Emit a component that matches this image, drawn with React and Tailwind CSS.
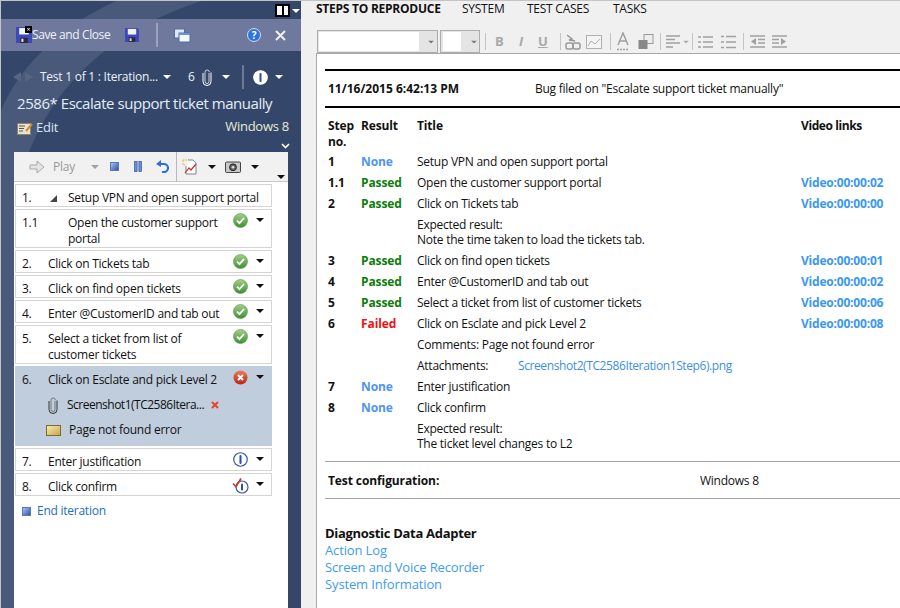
import React from "react";

const font = { fontFamily: '"Open Sans", "Noto Sans", sans-serif', letterSpacing: "-0.25px" };

const Caret = ({ color = "#111", className = "" }) => (
  <svg width="8" height="4" viewBox="0 0 8 4" className={`shrink-0 ${className}`}>
    <path d="M0 0h8L4 4z" fill={color} />
  </svg>
);

const Floppy = ({ size = 15 }) => (
  <svg width={size} height={size} viewBox="0 0 15 15">
    <path d="M0 0h13l2 2v13H0z" fill="#3f48b8" />
    <rect x="3" y="1" width="9" height="6" fill="#f2f4fb" />
    <rect x="4" y="10" width="7" height="5" fill="#2a2a44" />
    <rect x="5" y="11" width="2" height="3" fill="#ddd" />
  </svg>
);

const Clip = ({ stroke = "#fff", back = "#555" }) => (
  <svg width="10" height="17" viewBox="0 0 10 17" className="shrink-0">
    <path
      d="M7 4v8.5a2 2 0 0 1-4 0V3.2a2.2 2.2 0 0 1 4.4 0"
      fill="none"
      stroke={back}
      strokeWidth="1"
    />
    <path d="M1 4v8.5a4 4 0 0 0 8 0V3.5" fill="none" stroke={stroke} strokeWidth="1" />
  </svg>
);

const StopSquare = ({ size = 9 }) => (
  <span
    className="block bg-gradient-to-br from-[#a9c3ee] to-[#2f55a8] border border-[#5a78b8]"
    style={{ width: size, height: size }}
  />
);

const Pass = () => (
  <svg width="15" height="15" viewBox="0 0 15 15">
    <defs>
      <linearGradient id="gp" x1="0" y1="0" x2="0" y2="1">
        <stop offset="0" stopColor="#a4d08c" />
        <stop offset="1" stopColor="#3d8f2e" />
      </linearGradient>
    </defs>
    <circle cx="7.5" cy="7.5" r="7" fill="url(#gp)" stroke="#55904a" strokeWidth="0.6" />
    <path d="M4 7.6l2.5 2.6L11 5" fill="none" stroke="#fff" strokeWidth="1.8" />
  </svg>
);

const Fail = () => (
  <svg width="15" height="15" viewBox="0 0 15 15">
    <defs>
      <linearGradient id="gf" x1="0" y1="0" x2="0" y2="1">
        <stop offset="0" stopColor="#ee7a5c" />
        <stop offset="1" stopColor="#bb2410" />
      </linearGradient>
    </defs>
    <circle cx="7.5" cy="7.5" r="7" fill="url(#gf)" />
    <path d="M5 5l5 5M10 5l-5 5" stroke="#fff" strokeWidth="2" />
  </svg>
);

const Info = ({ size = 16, fill = "#fff", ring = "#3a5da5", bar = "#2f4f96", width = 1.3 }) => (
  <svg width={size} height={size} viewBox="0 0 16 16">
    <circle cx="8" cy="8" r="7.2" fill={fill} stroke={ring} strokeWidth={width} />
    <rect x="6.9" y="3.2" width="2.2" height="9.6" rx="1" fill={bar} />
  </svg>
);

const InfoChecked = () => (
  <svg width="17" height="17" viewBox="0 0 17 17">
    <circle cx="10" cy="10" r="6" fill="#fff" stroke="#3a5da5" strokeWidth="1.2" />
    <rect x="9" y="6.5" width="2" height="7" rx="1" fill="#2f4f96" />
    <path d="M1 6.5l3 3.2L9 1.5" fill="none" stroke="#cf3a2a" strokeWidth="1.7" />
  </svg>
);

const StepRow = ({ no, text, icon, wrap, h = "h-[23px]", children, active, caret = true, indent }) => (
  <div
    className={`${h} w-[257px] ml-px border flex items-start shrink-0 ${
      active ? "bg-[#bfcddc] border-[#bfcddc]" : "bg-white border-[#d4d4d4]"
    }`}
  >
    <div className="w-[32px] pl-[6px] pt-[4px] shrink-0">{no}</div>
    <div className="flex-1 min-w-0">
      <div className={`pt-[5px] leading-[16px] ${indent ? "pl-[20px]" : ""} ${wrap || ""}`}>{text}</div>
      {children}
    </div>
    <div className="w-[18px] pt-[3px] flex justify-center shrink-0">{icon}</div>
    <div className="w-[22px] pt-[8px] pl-[7px] shrink-0">{caret && <Caret className="block" />}</div>
  </div>
);

const StepsToolbar = () => (
  <div className="h-[30px] bg-[#f1f1f1] border-b border-[#c8c8c8] flex items-center relative">
    <svg width="16" height="14" viewBox="0 0 16 14" className="ml-[15px]">
      <path d="M1 5h7V1l7 6-7 6V9H1z" fill="#e5e5e5" stroke="#a8a8a8" />
    </svg>
    <span className="ml-[8px] text-[#9a9a9a]">Play</span>
    <Caret color="#a0a0a0" className="ml-[16px]" />
    <span className="ml-[11px]"><StopSquare /></span>
    <svg width="8" height="11" viewBox="0 0 8 11" className="ml-[15px]">
      <rect x="0.5" y="0.5" width="2.6" height="10" fill="#6f8fd0" stroke="#2f55a8" strokeWidth="0.7" />
      <rect x="4.9" y="0.5" width="2.6" height="10" fill="#6f8fd0" stroke="#2f55a8" strokeWidth="0.7" />
    </svg>
    <svg width="13" height="13" viewBox="0 0 13 13" className="ml-[14px]">
      <path d="M3 4h5a3.5 3.5 0 0 1 0 8H6" fill="none" stroke="#2f6fd0" strokeWidth="2.2" />
      <path d="M5 0v7L0 4z" fill="#2f6fd0" />
    </svg>
    <span className="ml-[7px] w-px h-[30px] bg-[#b8b8b8]" />
    <svg width="16" height="16" viewBox="0 0 16 16" className="ml-[5px]">
      <rect x="1" y="1" width="6" height="5" fill="none" stroke="#e0b820" strokeDasharray="1.5 1" />
      <path d="M6 1h5l3 3v11H4V7" fill="#fff" stroke="#667" strokeWidth="0.8" />
      <path d="M3 14l4-5 2 2 5-6" fill="none" stroke="#c8302a" strokeWidth="1.2" />
    </svg>
    <Caret className="ml-[10px]" />
    <svg width="16" height="13" viewBox="0 0 16 13" className="ml-[9px]">
      <rect x="0.5" y="2" width="15" height="10.5" rx="1" fill="#c8c8c8" stroke="#444" />
      <circle cx="8" cy="7.3" r="3.4" fill="#666" stroke="#222" />
      <circle cx="8" cy="7.3" r="1.3" fill="#ddd" />
    </svg>
    <Caret className="ml-[10px]" />
    <Caret className="absolute right-[3px] bottom-[2px]" />
  </div>
);

const LeftPanel = () => (
  <div className="w-[301px] h-[608px] shrink-0 relative overflow-hidden bg-[#34476a] border-l border-t border-[#c4c4c4] text-[12px]">
    <svg className="absolute left-0 top-0" width="301" height="608" viewBox="0 0 301 608">
      <path d="M200 0C110 30 35 90 14 200V608H0V110C20 60 70 20 115 0z" fill="#fff" opacity="0.1" />
    </svg>
    <div className="relative flex flex-col h-full">
      <div className="h-[18px] flex items-center justify-end pt-[1px]">
        <span className="w-[15px] h-[13px] border-2 border-black bg-white flex justify-center">
          <span className="w-[2px] bg-black" />
        </span>
        <Caret color="#fff" className="ml-[2px] mr-[1px]" />
      </div>
      <div className="h-[32px] bg-[#6f789d] flex items-center text-[#f0f2f8] whitespace-nowrap">
        <span className="ml-[15px] relative">
          <Floppy size={16} />
          <span className="absolute -top-[1px] left-[9px] w-[7px] h-[7px] bg-black text-white text-[7px] leading-[7px] text-center">×</span>
        </span>
        <span className="ml-[0px] tracking-[-0.4px] w-[79px] shrink-0">Save and Close</span>
        <span className="ml-[14px]"><Floppy size={14} /></span>
        <span className="ml-[17px] w-[2px] h-[24px] bg-[#9aa2bd]" />
        <svg width="17" height="15" viewBox="0 0 17 15" className="ml-[16px]">
          <rect x="0.5" y="1" width="10" height="9" fill="#dfe9f5" stroke="#4a6fa8" />
          <rect x="5" y="5" width="11" height="9" fill="#f4f7fb" stroke="#4a6fa8" />
          <rect x="5" y="5" width="11" height="2" fill="#6c93c8" />
        </svg>
        <span className="ml-[56px] w-[14px] h-[14px] rounded-full bg-[#2f73d8] border border-[#cfe0f8] text-white text-[10px] font-bold leading-[12px] text-center">?</span>
        <svg width="11" height="11" viewBox="0 0 11 11" className="ml-[14px]">
          <path d="M1 1l9 9M10 1l-9 9" stroke="#f0f0f0" strokeWidth="2" />
        </svg>
      </div>
      <div className="h-[26px] flex items-center text-[#eef2f8] whitespace-nowrap mt-[13px]">
        <svg width="20" height="10" viewBox="0 0 20 10" className="ml-[12px]">
          <path d="M8 0v10L0 5zM12 0v10l8-5z" fill="#58657f" />
        </svg>
        <span className="ml-[7px] w-[116px] shrink-0">Test 1 of 1 : Iteration...</span>
        <Caret color="#fff" className="ml-[7px]" />
        <span className="ml-[17px]">6</span>
        <span className="ml-[7px]"><Clip back="#cfd6e2" /></span>
        <Caret color="#fff" className="ml-[10px]" />
        <span className="ml-[12px] w-[2px] h-[24px] bg-[#6d7a94]" />
        <span className="ml-[9px]">
          <Info size={15} fill="#fff" ring="#fff" bar="#2f4f96" />
        </span>
        <Caret color="#fff" className="ml-[7px]" />
      </div>
      <div className="pl-[16px] text-[15px] leading-[22px] tracking-[-0.45px] text-[#e4edf7] whitespace-nowrap mt-[2px]">
        2586* Escalate support ticket manually
      </div>
      <div className="h-[22px] flex items-center text-[#dce6f4] text-[13px] mt-[3px] whitespace-nowrap">
        <svg width="16" height="13" viewBox="0 0 16 13" className="ml-[16px]">
          <rect x="0.5" y="1.5" width="13" height="11" fill="#e8e2cf" stroke="#8a8470" />
          <path d="M2 4h6M2 6.5h5M2 9h4" stroke="#555" />
          <path d="M9 9l6-7" stroke="#d88a20" strokeWidth="2" />
        </svg>
        <span className="ml-[3px]">Edit</span>
        <span className="ml-auto mr-[12px] text-[#e6ecd2] -mt-[3px]">Windows 8</span>
      </div>
      <div className="h-[7px] flex justify-end pr-[11px] mt-[4px]">
        <svg width="9" height="6" viewBox="0 0 9 6">
          <path d="M1 1l3.5 3.5L8 1" fill="none" stroke="#fff" strokeWidth="1.6" />
        </svg>
      </div>
      <div className="mt-[2px] ml-[13px] w-[274px] flex-1 bg-white text-[#111]">
        <StepsToolbar />
        <div className="flex flex-col gap-[2px] pt-[2px]">
          <StepRow
            no="1."
            caret={false}
            text={
              <span className="flex items-center">
                <svg width="7" height="7" viewBox="0 0 7 7" className="ml-[2px] shrink-0">
                  <path d="M7 0v7H0z" fill="#444" />
                </svg>
                <span className="ml-[11px] whitespace-nowrap">Setup VPN and open support portal</span>
              </span>
            }
          />
          <StepRow no="1.1" h="h-[39px]" indent text={<>Open the customer support<br />portal</>} icon={<Pass />} />
          <StepRow no="2." text="Click on Tickets tab" icon={<Pass />} />
          <StepRow no="3." text="Click on find open tickets" icon={<Pass />} />
          <StepRow no="4." text="Enter @CustomerID and tab out" icon={<Pass />} />
          <StepRow no="5." h="h-[39px]" text={<>Select a ticket from list of<br />customer tickets</>} icon={<Pass />} />
          <StepRow no="6." h="h-[80px]" active text="Click on Esclate and pick Level 2" icon={<Fail />}>
            <div className="flex items-center mt-[9px] h-[16px]">
              <Clip stroke="#333" back="#777" />
              <span className="ml-[9px] whitespace-nowrap tracking-[-0.5px]">Screenshot1(TC2586Itera...</span>
              <svg width="8" height="8" viewBox="0 0 8 8" className="ml-[7px] shrink-0">
                <path d="M1 1l6 6M7 1l-6 6" stroke="#e8452f" strokeWidth="2" />
              </svg>
            </div>
            <div className="flex items-center mt-[9px] h-[16px] -ml-[2px]">
              <span className="w-[15px] h-[11px] bg-gradient-to-br from-[#f7eaa8] to-[#c8a84c] border border-[#7d6a30]" />
              <span className="ml-[8px]">Page not found error</span>
            </div>
          </StepRow>
          <StepRow no="7." text="Enter justification" icon={<Info size={15} />} />
          <StepRow no="8." text="Click confirm" icon={<InfoChecked />} />
        </div>
        <div className="flex items-center ml-[8px] mt-[6px] text-[#1c6dc8]">
          <StopSquare />
          <span className="ml-[6px]">End iteration</span>
        </div>
      </div>
    </div>
  </div>
);

const Sep = ({ ml }) => <span className={`${ml} w-px h-[17px] bg-[#c4c4c4] shrink-0`} />;

const EditorToolbar = () => (
  <div className="h-[36px] bg-[#f0f0f0] flex items-center pt-[13px] pl-[13px] text-[#a8a8a8]">
    <div className="w-[121px] h-[23px] border border-[#adadad] bg-[#e4e4e4] flex items-center shrink-0">
      <span className="w-[100px] h-[19px] ml-px bg-white" />
      <Caret color="#777" className="ml-[8px] scale-75" />
    </div>
    <div className="w-[40px] h-[23px] border border-[#adadad] bg-[#e4e4e4] flex items-center ml-[2px] shrink-0">
      <span className="w-[18px] h-[19px] ml-[2px] bg-white" />
      <Caret color="#777" className="ml-[9px] scale-75" />
    </div>
    <Sep ml="ml-[5px]" />
    <span className="ml-[9px] font-bold text-[13px] w-[14px]">B</span>
    <span className="ml-[10px] font-bold italic text-[13px] w-[10px]">I</span>
    <span className="ml-[9px] font-bold underline text-[13px] w-[13px]">U</span>
    <Sep ml="ml-[9px]" />
    <svg width="16" height="16" viewBox="0 0 16 16" className="ml-[4px]">
      <path d="M2 1l5 4-3 1 6 1" fill="none" stroke="#999" strokeWidth="1.5" />
      <rect x="1" y="9" width="7" height="6" rx="2" fill="none" stroke="#999" strokeWidth="1.5" />
      <rect x="8" y="9" width="7" height="6" rx="2" fill="none" stroke="#999" strokeWidth="1.5" />
    </svg>
    <svg width="16" height="14" viewBox="0 0 16 14" className="ml-[5px]">
      <rect x="0.5" y="0.5" width="15" height="13" fill="#f4f4f4" stroke="#b0b0b0" />
      <path d="M2 11l3-5 4 3 5-5" fill="none" stroke="#b0b0b0" />
    </svg>
    <Sep ml="ml-[8px]" />
    <svg width="14" height="19" viewBox="0 0 14 19" className="ml-[5px]">
      <path d="M2 13L7 1l5 12M4 9h6" fill="none" stroke="#a0a0a0" strokeWidth="1.5" />
      <path d="M1 17.5h12" stroke="#a0a0a0" strokeDasharray="2 1" strokeWidth="1.5" />
    </svg>
    <svg width="16" height="16" viewBox="0 0 16 16" className="ml-[8px]">
      <rect x="6" y="0.5" width="9" height="9" fill="#eee" stroke="#999" />
      <rect x="0.5" y="6" width="9" height="9" fill="#888" />
    </svg>
    <Sep ml="ml-[6px]" />
    <svg width="14" height="13" viewBox="0 0 14 13" className="ml-[5px]">
      <path d="M0 1h14M0 4.5h9M0 8h14M0 12h7" stroke="#a0a0a0" strokeWidth="1.5" />
    </svg>
    <Caret color="#aaa" className="ml-[2px] scale-75" />
    <Sep ml="ml-[2px]" />
    <svg width="15" height="14" viewBox="0 0 15 14" className="ml-[5px]">
      <path d="M0 2h3M5 2h10M0 7h3M5 7h10M0 12h3M5 12h10" stroke="#a0a0a0" strokeWidth="1.5" />
    </svg>
    <svg width="15" height="16" viewBox="0 0 15 16" className="ml-[8px]">
      <path d="M0 2.5h3M5 2.5h10M0 8h3M5 8h10M0 13.5h3M5 13.5h10" stroke="#a0a0a0" strokeWidth="1.3" />
    </svg>
    <Sep ml="ml-[7px]" />
    <svg width="15" height="13" viewBox="0 0 15 13" className="ml-[6px]">
      <path d="M0 1h15M8 4.5h7M8 8h7M0 12h15" stroke="#a0a0a0" strokeWidth="1.3" />
      <path d="M6 3L1 6.5 6 10z" fill="#a0a0a0" />
    </svg>
    <svg width="15" height="13" viewBox="0 0 15 13" className="ml-[7px]">
      <path d="M0 1h15M0 4.5h7M0 8h7M0 12h15" stroke="#a0a0a0" strokeWidth="1.3" />
      <path d="M9 3l5 3.5L9 10z" fill="#a0a0a0" />
    </svg>
  </div>
);

const Cols = ({ step, result, resultClass = "", title, video, h = "h-[21px]" }) => (
  <div className={`${h} flex items-start leading-[15px]`}>
    <span className="w-[36px] pl-[3px] font-bold shrink-0 tracking-[-0.1px]">{step}</span>
    <span className={`w-[56px] shrink-0 font-bold tracking-[-0.1px] ${resultClass}`}>{result}</span>
    <span className="w-[384px] shrink-0 whitespace-nowrap">{title}</span>
    {video && <span className="font-bold tracking-[-0.2px] text-[#3a98f0] whitespace-nowrap">{video}</span>}
  </div>
);

const none = "text-[#4f94f5]";
const passed = "text-[#0a7d0a]";

const RightPanel = () => (
  <div className="flex-1 min-w-0 h-[608px] bg-[#f0f0f0] pl-[3px] flex flex-col text-[12px] text-[#111] overflow-hidden border-t border-[#c4c4c4]">
    <div className="h-[16px] flex items-center pl-[12px] whitespace-nowrap">
      <span className="font-bold w-[146px] shrink-0">STEPS TO REPRODUCE</span>
      <span className="w-[65px] shrink-0">SYSTEM</span>
      <span className="w-[86px] shrink-0">TEST CASES</span>
      <span>TASKS</span>
    </div>
    <EditorToolbar />
    <div className="ml-[12px] flex-1 bg-white border-l border-t border-[#a8a8a8] pl-[8px]">
      <div className="mt-[15px] h-[39px] border-t-2 border-b-2 border-black flex items-center whitespace-nowrap">
        <span className="w-[210px] pl-[3px] font-bold tracking-normal shrink-0">11/16/2015 6:42:13 PM</span>
        <span>Bug filed on "Escalate support ticket manually"</span>
      </div>
      <div className="pt-[10px]">
        <div className="h-[36px] flex leading-[16px] font-bold tracking-[-0.15px]">
          <span className="w-[36px] pl-[3px] shrink-0">Step<br />no.</span>
          <span className="w-[56px] shrink-0">Result</span>
          <span className="w-[384px] shrink-0">Title</span>
          <span className="whitespace-nowrap tracking-[-0.4px]">Video links</span>
        </div>
        <Cols step="1" result="None" resultClass={none} title="Setup VPN and open support portal" />
        <Cols step="1.1" result="Passed" resultClass={passed} title="Open the customer support portal" video="Video:00:00:02" />
        <Cols step="2" result="Passed" resultClass={passed} title="Click on Tickets tab" video="Video:00:00:00" />
        <Cols h="h-[36px]" title={<>Expected result:<br />Note the time taken to load the tickets tab.</>} />
        <Cols step="3" result="Passed" resultClass={passed} title="Click on find open tickets" video="Video:00:00:01" />
        <Cols step="4" result="Passed" resultClass={passed} title="Enter @CustomerID and tab out" video="Video:00:00:02" />
        <Cols step="5" result="Passed" resultClass={passed} title="Select a ticket from list of customer tickets" video="Video:00:00:06" />
        <Cols step="6" result="Failed" resultClass="text-[#f01010]" title="Click on Esclate and pick Level 2" video="Video:00:00:08" />
        <Cols title="Comments: Page not found error" />
        <Cols
          title={
            <span className="flex">
              <span className="w-[101px]">Attachments:</span>
              <span className="text-[#3a8fe8] tracking-[-0.4px]">Screenshot2(TC2586Iteration1Step6).png</span>
            </span>
          }
        />
        <Cols step="7" result="None" resultClass={none} title="Enter justification" />
        <Cols step="8" result="None" resultClass={none} title="Click confirm" />
        <Cols h="h-[36px]" title={<>Expected result:<br />The ticket level changes to L2</>} />
      </div>
      <div className="mt-[4px] h-[38px] pt-[1px] border-t border-b border-[#a4a4a4] flex items-center">
        <span className="w-[375px] pl-[3px] font-bold tracking-[-0.1px] shrink-0">Test configuration:</span>
        <span>Windows 8</span>
      </div>
      <div className="mt-[26px] text-[13px] leading-[17px] tracking-[-0.13px]">
        <div className="font-bold tracking-[-0.3px]">Diagnostic Data Adapter</div>
        <div className="text-[#3d9bf5]">Action Log</div>
        <div className="text-[#3d9bf5]">Screen and Voice Recorder</div>
        <div className="text-[#3d9bf5]">System Information</div>
      </div>
    </div>
  </div>
);

export default function App() {
  return (
    <div className="w-[900px] h-[608px] flex overflow-hidden bg-white" style={font}>
      <LeftPanel />
      <RightPanel />
    </div>
  );
}
